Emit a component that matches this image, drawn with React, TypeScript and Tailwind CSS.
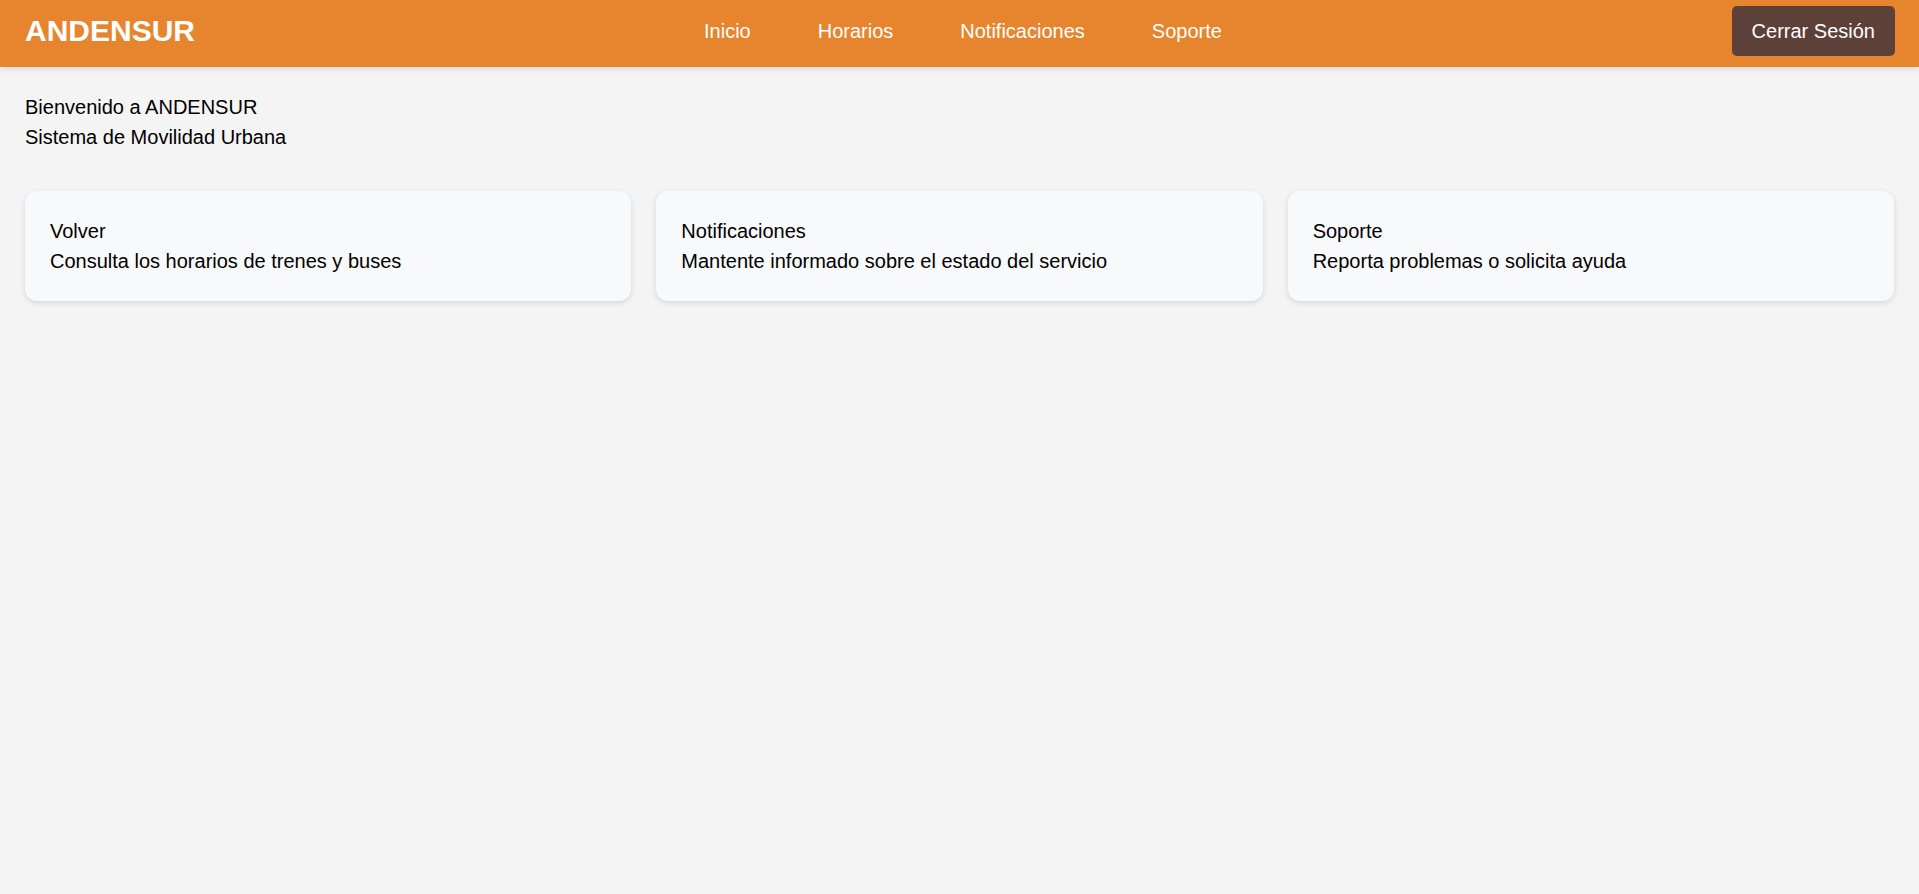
const navLinks = ["Inicio", "Horarios", "Notificaciones", "Soporte"];

const cards = [
  { title: "Volver", text: "Consulta los horarios de trenes y buses" },
  { title: "Notificaciones", text: "Mantente informado sobre el estado del servicio" },
  { title: "Soporte", text: "Reporta problemas o solicita ayuda" },
];

export default function App() {
  return (
    <div className="min-h-screen bg-[#f4f4f4] font-['Liberation_Sans',Arial,sans-serif] text-black">
      <header className="h-[67px] bg-[#e7852e] pl-[25px] pr-[24px] pb-[6px] flex items-center shadow-[0_2px_6px_rgba(0,0,0,0.12)] relative">
        <h1 className="text-[30px] font-bold text-white leading-none">ANDENSUR</h1>
        <nav className="ml-[509px] flex gap-[67px]">
          {navLinks.map((link) => (
            <a key={link} href="#" className="text-[20px] text-white">
              {link}
            </a>
          ))}
        </nav>
        <button className="ml-auto h-[50px] px-5 rounded-[5px] bg-[#5d4037] text-white text-[20px]">
          Cerrar Sesión
        </button>
      </header>

      <main className="p-[25px]">
        <div className="text-[20px] leading-[30px] mb-[39px]">
          <p>Bienvenido a ANDENSUR</p>
          <p>Sistema de Movilidad Urbana</p>
        </div>
        <div className="grid grid-cols-3 gap-[25px]">
          {cards.map((card) => (
            <div
              key={card.title}
              className="bg-[#f8f9fa] rounded-xl p-[25px] shadow-[0_2px_6px_rgba(0,0,0,0.12)] text-[20px] leading-[30px]"
            >
              <h3>{card.title}</h3>
              <p>{card.text}</p>
            </div>
          ))}
        </div>
      </main>
    </div>
  );
}
